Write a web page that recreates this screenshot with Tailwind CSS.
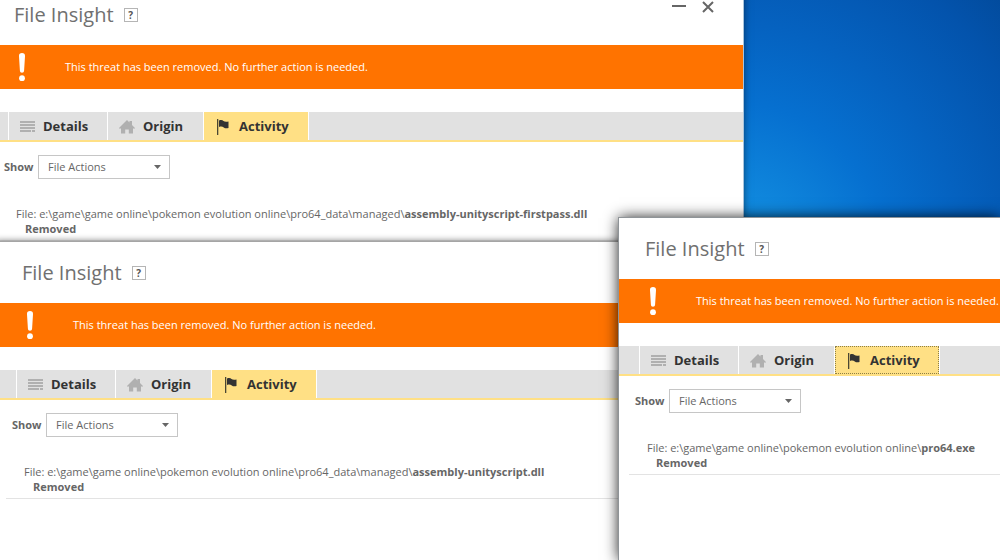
<!DOCTYPE html>
<html lang="en">
<head>
<meta charset="utf-8">
<title>File Insight</title>
<script src="https://cdn.jsdelivr.net/npm/@tailwindcss/browser@4"></script>
</head>
<body class="font-['Open_Sans',sans-serif]">
<svg class="hidden">
  <symbol id="alert" viewBox="0 0 8 30"><path fill="#fff" d="M4 1C5.900 1 7.200 2.200 7 4.200L6.100 18.500C6 20 5.200 20.700 4 20.700S2 20 1.900 18.500L1 4.200C.8 2.200 2.100 1 4 1Z"/><circle cx="4" cy="26.200" r="2.900" fill="#fff"/></symbol>
  <symbol id="lines" viewBox="0 0 15 12"><path fill="#b0b0b0" d="M0 0h15v2H0zM0 3h15v2H0zM0 6h15v2H0zM0 9h11v2H0zM12 9h3v2h-3z"/></symbol>
  <symbol id="home" viewBox="0 0 16 14"><path fill="#b0b0b0" d="M8 0 10.500 2.500V1H13V5L16 8V8.500H14V13.500H9.800V9.500H6.200V13.500H2V8.500H0V8Z"/></symbol>
  <symbol id="flag" viewBox="0 0 12 16"><path fill="#333" d="M2 1.500C4 .7 5.500 1 6.500 1.900S9 2.800 11.500 2.500V9C9.500 9.600 8 9.400 6.800 8.500S4 7.300 2 8Z"/><path fill="#4b4732" d="M0 0h1.300V16H0z"/></symbol>
</svg>
<main id="desktop" class="relative h-screen overflow-hidden bg-[radial-gradient(ellipse_420px_440px_at_730px_270px,#1496e6_0%,#0f86dc_18%,#0670d0_38%,#0562c0_56%,#0353ac_78%,#02448f_100%)]"></main>
<script>
const windows = [
  { id: 'a', place: 'left-[-12px] top-[-16px] w-[755px] h-[270px] shadow-[1px_0_0_#a9c4dc,0_0_8px_rgba(0,0,0,0.6)]', path: 'e:\\game\\game online\\pokemon evolution online\\pro64_data\\managed\\', name: 'assembly-unityscript-firstpass.dll', tab: '' },
  { id: 'b', place: 'left-[-4px] right-0 top-[242px] bottom-0 shadow-[0_-1px_0_#a5a5a5,0_-2px_6px_rgba(0,0,0,0.4)]', path: 'e:\\game\\game online\\pokemon evolution online\\pro64_data\\managed\\', name: 'assembly-unityscript.dll', tab: '' },
  { id: 'c', place: 'left-[619px] right-0 top-[218px] bottom-0 shadow-[0_0_0_1px_#8f9498,0_0_14px_rgba(0,0,0,0.95)]', path: 'e:\\game\\game online\\pokemon evolution online\\', name: 'pro64.exe', tab: 'outline-1 outline-dotted -outline-offset-1 outline-[#8d7f45]' },
];
document.getElementById('desktop').innerHTML = windows.map(w => `
<section class="absolute ${w.place} overflow-hidden bg-white text-[#666]">
  <header class="flex h-[61px] items-center pl-[26px] pr-[29px]">
    <h1 class="text-[20px] leading-7 whitespace-nowrap text-[#707070]">File Insight</h1>
    <button aria-label="Help" class="ml-[10px] h-[14px] w-[14px] border border-[#b5b5b5] text-[10px] leading-3 font-bold text-[#555]">?</button>
    ${w.id === 'a' ? `<div class="ml-auto flex gap-4 pb-4">
      <button aria-label="Minimize"><svg class="h-3 w-[14px]" viewBox="0 0 14 12"><path d="M0 5h14" stroke="#666" stroke-width="2"/></svg></button>
      <button aria-label="Close"><svg class="h-3 w-3" viewBox="0 0 12 12"><path d="M1 1 11 11M11 1 1 11" stroke="#666" stroke-width="2"/></svg></button>
    </div>` : ''}
  </header>
  <div role="status" class="flex h-11 items-center bg-[#ff7300] pl-[30px] text-[11px] whitespace-nowrap text-white">
    <svg class="mr-[39px] h-[30px] w-2 shrink-0"><use href="#alert"/></svg>
    This threat has been removed. No further action is needed.
  </div>
  <nav role="tablist" class="mt-[23px] flex h-[30px] border-b-2 border-[#ffe085] bg-[#e1e1e1] pl-5 text-[13px] font-bold text-[#333]">
    <button role="tab" class="flex w-[99px] items-center gap-2 border-l border-white pt-px pl-[11px]"><svg class="h-3 w-[15px]"><use href="#lines"/></svg>Details</button>
    <button role="tab" class="flex w-[97px] items-center gap-2 border-x border-white pt-px pl-[11px]"><svg class="h-[14px] w-4"><use href="#home"/></svg>Origin</button>
    <button role="tab" aria-selected="true" class="flex w-[105px] border-r border-white"><span class="flex h-full w-full items-center gap-[10px] bg-[#ffe085] pt-px pl-[13px] ${w.tab}"><svg class="h-4 w-3"><use href="#flag"/></svg>Activity</span></button>
  </nav>
  <div class="flex items-center pt-[13px] pl-4 text-[11px]">
    <label for="show-${w.id}" class="w-[34px] font-bold">Show</label>
    <div class="relative">
      <select id="show-${w.id}" class="h-6 w-[132px] appearance-none border border-[#c6c6c6] bg-white pl-[9px] leading-4"><option>File Actions</option></select>
      <svg class="pointer-events-none absolute top-[10px] right-[9px] h-1 w-[7px]" viewBox="0 0 7 4"><path d="M0 0h7L3.500 4z" fill="#666"/></svg>
    </div>
  </div>
  <div class="ml-[10px] border-b border-[#e3e3e3] pt-[27px] pb-1 pl-[18px] text-[11px] leading-[15px] whitespace-nowrap">
    <p>File: ${w.path}<b>${w.name}</b></p>
    <p class="pl-[9px] font-bold">Removed</p>
  </div>
</section>`).join('');
</script>
</body>
</html>
